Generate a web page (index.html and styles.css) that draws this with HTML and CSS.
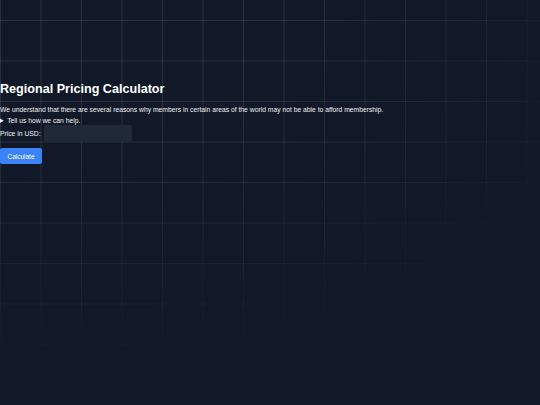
FILE: index.html
```html
<!DOCTYPE html>
<html lang="en">
<head>
    <meta charset="UTF-8">
    <meta name="viewport" content="width=device-width, initial-scale=1.0">
    <title>Regional Pricing Calculator</title>
    <link rel="stylesheet" href="styles.css">
</head>
<body>

    <div class="grid-bg"></div>

    <main class="container">
        <h2>Regional Pricing Calculator</h2>
        <p class="intro">We understand that there are several reasons why members in certain areas of the world may not be able to afford membership.</p>

        <details class="help">
            <summary>Tell us how we can help.</summary>
        </details>

        <form id="pricingForm">
            <div class="form-group">
                <label for="price">Price in USD:</label>
                <input type="text" id="price" />
            </div>
            <button type="button" id="calculateButton">Calculate</button>
        </form>
    </main>

</body>
</html>
```

FILE: styles.css
```css
/* General Styles */
body {
    font-family: 'Liberation Sans', Arial, sans-serif;
    background-color: #111827;
    color: #eef0f3;
    margin: 0;
    min-height: 100vh;
    position: relative;
    overflow: hidden;
}

/* faint grid that fades out towards the bottom right */
.grid-bg {
    position: absolute;
    inset: 0;
    background-image:
        linear-gradient(to right, rgba(255, 255, 255, 0.1) 1px, transparent 1px),
        linear-gradient(to bottom, rgba(255, 255, 255, 0.1) 1px, transparent 1px);
    background-size: 40.5px 40.5px;
    background-position: 0 20px;
    -webkit-mask-image: radial-gradient(ellipse 620px 390px at 15% 0, #000 35%, transparent 95%);
    mask-image: radial-gradient(ellipse 620px 390px at 15% 0, #000 35%, transparent 95%);
    pointer-events: none;
}

.container {
    position: relative;
    padding-top: 82px;
}

h2 {
    color: #fff;
    font-size: 12.6px;
    font-weight: 700;
    margin: 0 0 8px;
    line-height: 15px;
}

.intro {
    font-size: 6.75px;
    margin: 0;
    line-height: 10px;
}

.help {
    font-size: 6.75px;
    line-height: 10px;
    margin-top: 1px;
}

.help summary {
    cursor: pointer;
}

.form-group {
    display: flex;
    align-items: center;
    gap: 3px;
    margin-top: -1px;
}

label {
    font-size: 6.75px;
}

input {
    width: 88px;
    height: 17px;
    box-sizing: border-box;
    border: none;
    border-radius: 2px;
    background-color: #1f2937;
    color: #fff;
    font-size: 7px;
}

input:focus {
    outline: none;
}

button {
    margin-top: 6px;
    width: 42px;
    height: 16px;
    padding: 0;
    border: none;
    border-radius: 2px;
    background-color: #3b82f6;
    color: #fff;
    font-family: inherit;
    font-size: 6.5px;
    cursor: pointer;
}
```
